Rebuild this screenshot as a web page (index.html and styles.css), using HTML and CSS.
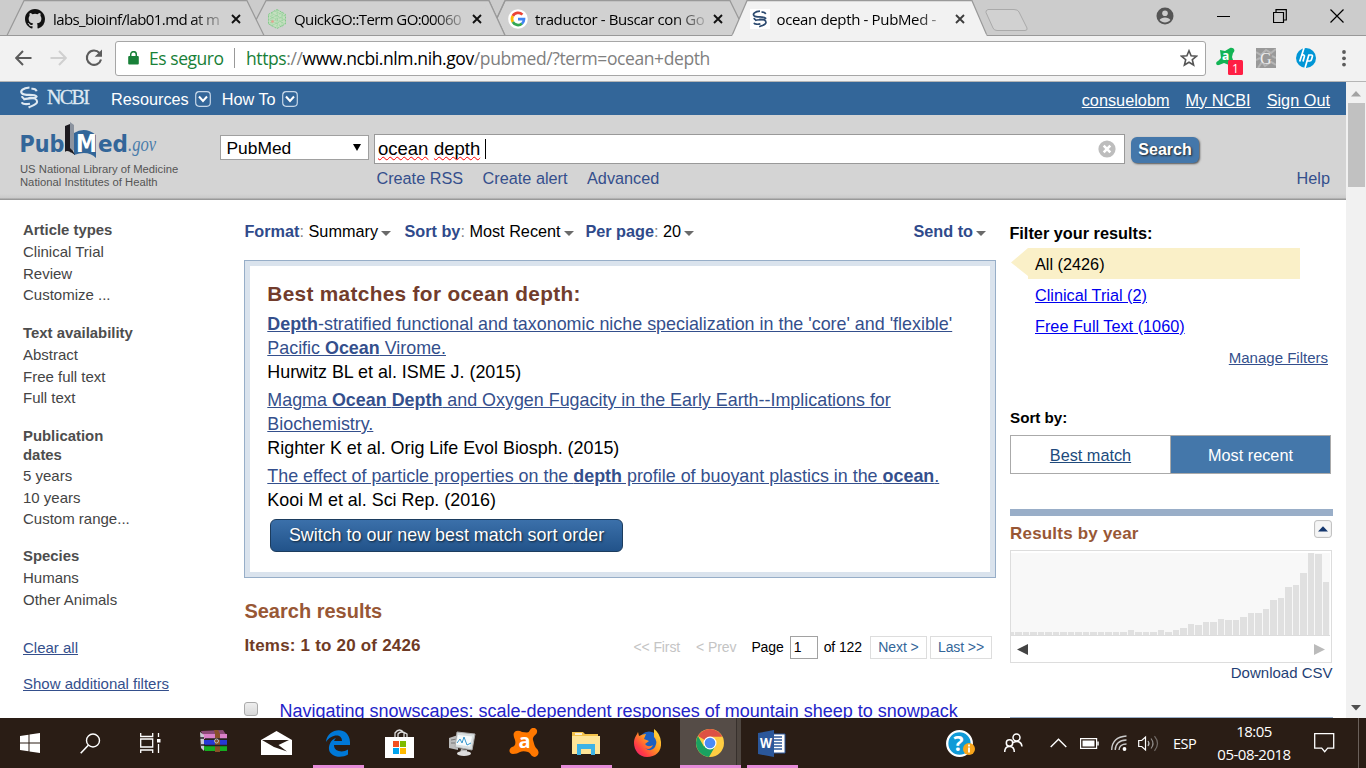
FILE: index.html
```html
<!DOCTYPE html>
<html lang="es">
<head>
<meta charset="utf-8">
<title>ocean depth - PubMed - NCBI</title>
<link rel="stylesheet" href="styles.css">
</head>
<body>
<svg class="defs" width="0" height="0"><defs>
  <symbol id="helix" viewBox="0 0 20 24"><path d="M10 1.500C3 2 0 5 2 7.500 5 11 15 7.500 17.500 11c0 2.500-10 1.500-14 3" fill="none" stroke="currentColor" stroke-width="2.300"/><path d="M12 2.800c3-.3 5 .8 5.500 2.700M2 10.500q.3 2 2.500 2.800M9 12.500c6-.5 9 1 9 4 0 3-5 4-9 6M2 17c.5 2.300 5 2.300 8.500 1.500" fill="none" stroke="currentColor" stroke-width="2.200"/></symbol>
  <symbol id="close" viewBox="0 0 10 10"><path d="M1 1l8 8M9 1l-8 8" stroke="#111" stroke-width="1.900"/></symbol>
  <symbol id="drop" viewBox="0 0 16 16"><rect x=".7" y=".7" width="14.600" height="14.600" rx="3.500" fill="none" stroke="#c5d6e8" stroke-width="1.200"/><path d="M4 5.500l4 4.500 4-4.500" fill="none" stroke="#fff" stroke-width="2"/></symbol>
</defs></svg>

<header class="tabstrip">
  <svg class="tabshapes" width="1366" height="36" viewBox="0 0 1366 36">
    <g fill="#d1d1d1" stroke="#999" stroke-width="1.200">
      <path d="M489 35.500L505 .7H730L747 35.500"/>
      <path d="M248 35.500L266 .7H489L505 35.500"/>
      <path d="M497 18L505 .7"/>
      <path d="M7 35.500L24 .7H247L264 35.500"/>
    </g>
    <path d="M489 .7L505 35.500H489L481 18z" fill="#d1d1d1"/>
    <path d="M489 .7L505 35.500" stroke="#999" stroke-width="1.200"/>
    <path d="M0 35.500H1366" stroke="#999"/>
    <path d="M732 35.500L747 .7H972L987 35.500V37H732" fill="#f2f2f2" stroke="#999" stroke-width="1.200"/>
    <path d="M732.600 35.500H986.400" stroke="#f2f2f2" stroke-width="2"/>
    <path d="M988 9.500H1014q4 0 5 2.500l8 16q.7 2.500-2 2.500H997q-3 0-4-2.500l-7-15.500q-.7-2 2-3z" fill="#d1d1d1" stroke="#aaa"/>
  </svg>
  <div class="tabs">
    <div class="tab t1">
      <svg width="20" height="20" viewBox="0 0 16 16"><path fill="#111" d="M8 0C3.580 0 0 3.580 0 8c0 3.540 2.290 6.530 5.470 7.590.4.070.55-.17.55-.38 0-.19-.01-.82-.01-1.490-2.010.37-2.530-.49-2.690-.94-.09-.23-.48-.94-.82-1.130-.28-.15-.68-.52-.01-.53.63-.01 1.080.58 1.230.82.720 1.210 1.870.87 2.330.66.070-.52.280-.87.510-1.070-1.780-.2-3.640-.89-3.640-3.950 0-.87.310-1.590.82-2.150-.08-.2-.36-1.020.08-2.120 0 0 .67-.21 2.200.82a7.600 7.600 0 0 1 4 0c1.530-1.040 2.200-.82 2.200-.82.440 1.100.160 1.920.080 2.120.510.560.820 1.270.820 2.150 0 3.070-1.870 3.750-3.650 3.950.290.250.540.730.540 1.480 0 1.070-.01 1.930-.01 2.200 0 .21.150.46.550.38A8 8 0 0 0 16 8c0-4.420-3.580-8-8-8z"/></svg>
      <span class="ttl">labs_bioinf/lab01.md at m</span><svg class="x" width="10" height="10"><use href="#close"/></svg>
    </div>
    <div class="tab t2">
      <svg width="20" height="20" viewBox="0 0 20 20"><path d="M10 .5l8.500 4.800v9.600L10 19.500l-8.500-4.600V5.300z" fill="#c4dfbf" stroke="#83c98a" stroke-dasharray="2 1"/><path d="M1 6l17 9M1 10l15 8M4 4l14 7M8 2l10 5M1 15l17-9M1 11l15-8M4 17l14-7M10 1v18M5 3v14M15 3v14" stroke="#8fd197" stroke-width=".8" stroke-dasharray="1.500 1"/><circle cx="5.500" cy="12.500" r="1.300" fill="#e8a090"/></svg>
      <span class="ttl">QuickGO::Term GO:00060</span><svg class="x" width="10" height="10"><use href="#close"/></svg>
    </div>
    <div class="tab t3">
      <svg width="20" height="20" viewBox="0 0 20 20"><circle cx="10" cy="10" r="9.800" fill="#fff"/><g fill="none" stroke-width="2.700"><path d="M14.400 5.600A6 6 0 0 0 4.800 7" stroke="#ea4335"/><path d="M4.800 7a6 6 0 0 0 0 6" stroke="#fbbc05"/><path d="M4.800 13a6 6 0 0 0 9.200 1.500" stroke="#34a853"/><path d="M10 10.200h6c0 2-.8 3.400-2.100 4.500" stroke="#4285f4"/></g></svg>
      <span class="ttl">traductor - Buscar con Go</span><svg class="x" width="10" height="10"><use href="#close"/></svg>
    </div>
    <div class="tab t4">
      <svg class="fav" width="20" height="20"><use href="#helix" x="2" y="1" width="16" height="18"/></svg>
      <span class="ttl">ocean depth - PubMed -</span><svg class="x" width="10" height="10"><use href="#close"/></svg>
    </div>
  </div>
  <div class="winbtns">
    <svg width="18" height="18" viewBox="0 0 18 18"><circle cx="9" cy="9" r="8.500" fill="#555"/><circle cx="9" cy="6.200" r="2.800" fill="#ccc"/><path d="M3.600 13c1.500-3.500 9.300-3.500 10.800 0-2.700 3.300-8.100 3.300-10.800 0z" fill="#ccc"/></svg>
    <svg width="13" height="13"><path d="M0 6.500h13" stroke="#000"/></svg>
    <svg width="14" height="14"><path d="M.5 3.500h10v10H.5zM3 3V.7h10.300v10.300H11" fill="none" stroke="#000" stroke-width="1.200"/></svg>
    <svg width="14" height="14"><path d="M.5 .5l13 13M13.500 .5l-13 13" stroke="#000" stroke-width="1.200"/></svg>
  </div>
</header>

<div class="toolbar">
  <div class="nav">
    <svg width="17" height="16" viewBox="0 0 17 16"><path d="M16.500 8H1.500M8 1L1.200 8 8 15" fill="none" stroke="#5c5c5c" stroke-width="2"/></svg>
    <svg width="17" height="16" viewBox="0 0 17 16"><path d="M.5 8h15M9 1l6.800 7L9 15" fill="none" stroke="#d0d0d0" stroke-width="2"/></svg>
    <svg width="18" height="18" viewBox="0 0 18 18"><path d="M14.500 4A7.200 7.200 0 1 0 16 10.500" fill="none" stroke="#5c5c5c" stroke-width="2.100"/><path d="M17 .5v7.300h-7.300z" fill="#5c5c5c"/></svg>
  </div>
  <div class="omni">
    <svg width="11" height="14" viewBox="0 0 11 14"><rect x=".2" y="5" width="10.600" height="8.500" rx="1" fill="#188038"/><path d="M2.700 6V3.500a2.800 2.800 0 0 1 5.600 0V6" fill="none" stroke="#188038" stroke-width="1.500"/></svg>
    <span class="secure">Es seguro</span><i class="vsep"></i>
    <span class="url"><b>https</b>://<em>www.ncbi.nlm.nih.gov</em>/pubmed/?term=ocean+depth</span>
    <svg class="star" width="18" height="18" viewBox="0 0 18 18"><path d="M9 1.800l2.100 5 5.300.4-4.100 3.500 1.300 5.300L9 13.200 4.400 16l1.300-5.300-4.100-3.500 5.300-.4z" fill="none" stroke="#555" stroke-width="1.600"/></svg>
  </div>
  <svg class="ext" width="28" height="29" viewBox="0 0 28 29"><path d="M5 3l5 1 5-3c4-1 6 3 3 5l-1 4 2 6-5 2-5-2-5 2c-3 1-4-3-1-4l3-3z" fill="#12b455"/><text x="7" y="13" class="exta">a</text><rect x="13" y="13" width="15" height="15" rx="1.500" fill="#ff1f44"/><text x="17" y="26" class="extn">1</text></svg>
  <svg class="ext2" width="20" height="20"><rect width="20" height="20" fill="#999"/><path d="M0 4l5 3 5-5 5 3 5-4M2 20l4-6 3 4 6-4 5 3M0 12l4-2M16 8l4 2" stroke="#b5b5b5" stroke-width="2" fill="none"/><text x="4" y="16" class="extg">G</text></svg>
  <svg class="ext3" width="20" height="20" viewBox="0 0 20 20"><circle cx="10" cy="10" r="10" fill="#0096d6"/><g stroke="#fff" stroke-width="1.700" fill="none"><path d="M8 0L3.700 13.500M5.500 7.300q3-1 3 .7L7 13.500M13 6.500L9 20M12.800 7h2.500q1.500 0 1 1.700l-.8 2.800q-.4 1.500-1.800 1.500h-2.400"/></g></svg>
  <svg class="dots" width="4" height="17"><g fill="#5c5c5c"><circle cx="2" cy="2" r="1.900"/><circle cx="2" cy="8.300" r="1.900"/><circle cx="2" cy="14.600" r="1.900"/></g></svg>
</div>

<div class="view">
<div class="page">
  <div class="ncbi">
    <svg class="hx" width="19" height="23"><use href="#helix"/></svg><span class="nlogo">NCBI</span>
    <span class="res">Resources</span><svg width="16" height="16"><use href="#drop"/></svg>
    <span class="how">How To</span><svg width="16" height="16"><use href="#drop"/></svg>
    <div class="acct"><a>consuelobm</a><a>My NCBI</a><a>Sign Out</a></div>
  </div>
  <div class="head">
    <div class="brand">
      <svg width="150" height="38" viewBox="0 0 150 38">
        <text x="-.5" y="29.500" class="pub" textLength="45" lengthAdjust="spacingAndGlyphs">Pub</text>
        <path d="M54 11q11-7 22 2v23q-8-8-22-3z" fill="#369"/>
        <path d="M50 0l4 3v25l-4 3z" fill="#8b939f"/><path d="M45 4l5-2v24q3 2 5 7-8-6-10-3z" fill="#1d1b20"/>
        <text x="56" y="29.500" class="med" textLength="21" lengthAdjust="spacingAndGlyphs">M</text>
        <text x="78" y="29.500" class="pub" textLength="30" lengthAdjust="spacingAndGlyphs">ed</text>
        <text x="108" y="29" class="gov" textLength="28" lengthAdjust="spacingAndGlyphs">.gov</text>
      </svg>
      <p>US National Library of Medicine<br>National Institutes of Health</p>
    </div>
    <div class="db">PubMed<svg width="8" height="7"><path d="M0 0h8L4 7z"/></svg></div>
    <div class="sbox">
      <div class="field"><span class="sp">ocean</span> <span class="sp">depth</span><i class="caret"></i>
        <svg class="clr" width="18" height="18"><circle cx="9" cy="9" r="8.600" fill="#bdbdbd"/><path d="M5.700 5.700l6.600 6.600M12.300 5.700l-6.600 6.600" stroke="#fff" stroke-width="2.600"/></svg></div>
      <div class="sub"><span>Create RSS</span><span>Create alert</span><span>Advanced</span></div>
    </div>
    <div class="go"><button>Search</button><span>Help</span></div>
  </div>

  <div class="cols">
    <aside class="side">
      <section><h4>Article types</h4><p>Clinical Trial</p><p>Review</p><p>Customize ...</p></section>
      <section><h4>Text availability</h4><p>Abstract</p><p>Free full text</p><p>Full text</p></section>
      <section><h4>Publication<br>dates</h4><p>5 years</p><p>10 years</p><p>Custom range...</p></section>
      <section><h4>Species</h4><p>Humans</p><p>Other Animals</p></section>
      <a>Clear all</a><a>Show additional filters</a>
    </aside>

    <main class="main">
      <div class="opts">
        <span class="o1"><b>Format</b><s>:</s> Summary<i class="tri"></i></span><span class="o2"><b>Sort by</b><s>:</s> Most Recent<i class="tri"></i></span><span class="o3"><b>Per page</b><s>:</s> 20<i class="tri"></i></span><span class="send"><b>Send to</b><i class="tri"></i></span>
      </div>
      <div class="best"><div class="bestin">
        <h3>Best matches for ocean depth:</h3>
        <div class="hit"><a><b>Depth</b>-stratified functional and taxonomic niche specialization in the 'core' and 'flexible'<br>Pacific <b>Ocean</b> Virome.</a><br>Hurwitz BL et al. ISME J. (2015)</div>
        <div class="hit"><a>Magma <b>Ocean</b> <b>Depth</b> and Oxygen Fugacity in the Early Earth--Implications for<br>Biochemistry.</a><br>Righter K et al. Orig Life Evol Biosph. (2015)</div>
        <div class="hit"><a>The effect of particle properties on the <b>depth</b> profile of buoyant plastics in the <b>ocean</b>.</a><br>Kooi M et al. Sci Rep. (2016)</div>
        <button>Switch to our new best match sort order</button>
      </div></div>
      <h2>Search results</h2>
      <div class="itemrow"><h5>Items: 1 to 20 of 2426</h5>
        <div class="pager"><span class="off">&lt;&lt; First</span><span class="off prev">&lt; Prev</span><span class="pg">Page</span><span class="num">1</span><span class="of">of 122</span><a>Next &gt;</a><a class="last">Last &gt;&gt;</a></div>
      </div>
      <div class="result"><i class="chk"></i><a>Navigating snowscapes: scale-dependent responses of mountain sheep to snowpack</a></div>
    </main>

    <aside class="right">
      <h4>Filter your results:</h4>
      <div class="all">All (2426)</div>
      <a class="flt">Clinical Trial (2)</a>
      <a class="flt">Free Full Text (1060)</a>
      <a class="manage">Manage Filters</a>
      <h6>Sort by:</h6>
      <div class="toggle"><span class="bm">Best match</span><span class="mr">Most recent</span></div>
      <div class="bar"></div>
      <div class="yr"><h4>Results by year</h4><svg width="18" height="18"><rect x=".6" y=".6" width="16.800" height="16.800" rx="2.500" fill="#f5f5f5" stroke="#bbb"/><path d="M4 11.500L9 6.300l5 5.200z" fill="#14376e"/></svg></div>
      <div class="chart"><div class="plot" id="plot"></div>
        <div class="arrows"><svg width="11" height="11"><path d="M0 5.500L11 0v11z" fill="#444"/></svg><svg width="11" height="11"><path d="M11 5.500L0 0v11z" fill="#bbb"/></svg></div></div>
      <div class="csv">Download CSV</div>
      <div class="nextbar"></div>
    </aside>
  </div>
</div>
<div class="scroll"><svg width="10" height="6"><path d="M0 5.500L5 0l5 5.500z" fill="#a3a3a3"/></svg><i class="thumb"></i><svg class="dn" width="10" height="6"><path d="M0 0h10L5 5.500z" fill="#505050"/></svg></div>
</div>

<footer class="task">
  <div class="c60"><svg width="20" height="20"><path d="M0 3l8.500-1.200V9.500H0zM9.500 1.600L20 0v9.500H9.500zM0 10.500h8.500v7.700L0 17zM9.500 10.500H20V20L9.500 18.400z" fill="#fff"/></svg></div>
  <div class="c60"><svg width="21" height="21"><circle cx="13" cy="7.500" r="6.500" fill="none" stroke="#fff" stroke-width="1.400"/><path d="M8.300 12.300L.7 20.200" stroke="#fff" stroke-width="1.600"/></svg></div>
  <div class="c60 tv"><svg width="21" height="20"><path d="M.7 0v3.500h12V0M.7 6h12v8H.7zM.7 20v-3h12v3M18.500 0v4M18.500 11v9" fill="none" stroke="#fff" stroke-width="1.300"/><path d="M17 6h3.500v3.500H17z" fill="#fff"/></svg></div>
  <div class="c62 rar"><svg width="28" height="22"><path d="M1 1l22-1 4 6H3z" fill="#8c4a78"/><path d="M3 4h24v5H4z" fill="#d980c8"/><path d="M0 8l4 2h23v5H4z" fill="#2638d5"/><path d="M1 14l4 2h22v5H5z" fill="#16ad20"/><path d="M0 2l4 3v16l-3-3z" fill="#c9c7d2"/><path d="M14 0h4l2 4v18h-5V4z" fill="#885128"/><path d="M0 8h4M1 15h4M5 9h22M5 15.500h22" stroke="#222" stroke-width="1.300"/><circle cx="16.500" cy="11" r="2" fill="none" stroke="#bbb"/></svg></div>
  <div class="c62"><svg width="31" height="24"><path d="M0 9L15.500 0 31 9v15H0z" fill="#fff"/><path d="M1 9h27l-10.500 5 8.500 6.500L13 16z" fill="#291c15"/></svg></div>
  <div class="c62 u"><svg width="26" height="28" viewBox="0 0 26 28"><path d="M1 13C2-1 24-4 25 13v3H9c0 7 9 8 14 4.500v5C14 31-1 26 5.500 13.500 7.500 10 11 9 11 9 9.500 10.500 9.200 11.500 9.200 12H17C17 4 6 5 1 13z" fill="#0078d7"/></svg></div>
  <div class="c62"><svg width="30" height="29"><path d="M0 8h29v21H0z" fill="#fff"/><path d="M10 8V4q4.500-6 9 0v4M13 8V5q3-4 9 0v3" stroke="#ddd" stroke-width="1.300" fill="none"/><path d="M8 12h6v6H8z" fill="#f25022"/><path d="M15 12h6v6h-6z" fill="#7fba00"/><path d="M8 19h6v6H8z" fill="#00a4ef"/><path d="M15 19h6v6h-6z" fill="#ffb900"/></svg></div>
  <div class="c62"><svg width="28" height="25"><path d="M1 7l9-3v15L1 17z" fill="#bbb"/><path d="M3 9l6-1M3 12l6 0" stroke="#777"/><path d="M9 1l18 2-3 16-17-3z" fill="#d9dfe0" stroke="#aaa"/><path d="M10 4l14 1.500-2 10-14-2z" fill="#f7fbfc"/><path d="M9 12l3-4 2 4 2-6 3 8 4-2" fill="none" stroke="#3596cc"/><path d="M13 18l6 1v3H12z" fill="#bbb"/><ellipse cx="16" cy="22.500" rx="7" ry="2.500" fill="#ddd"/></svg></div>
  <div class="c62"><svg width="30" height="30" viewBox="0 0 30 30"><path d="M7 3q3-1 6 1l5 .5q2 0 3-2.500c2-4 8-2 7 2 0 3-5 4-4 8 1 3 1 5 3 8 4 3 3 8-1 9-4 0-4-4-7-5s-6-1-8 0-4 2-7 2c-4 0-5-5-1-7 3-1 4-3 3-7-1-3-3-7 1-9z" fill="#ff7800"/><text x="9.500" y="19.500" class="ava">a</text></svg></div>
  <div class="c62 u"><svg width="28" height="24"><path d="M0 1h11l2 2h13v3H0z" fill="#f4c24a"/><path d="M0 5h28v18H0z" fill="#ffe598"/><path d="M3 3h7" stroke="#fff" stroke-width="1.500"/><path d="M5 24V13h18v11h-4v-6H9v6z" fill="#3eb3e6"/></svg></div>
  <div class="c62"><svg width="28" height="29" viewBox="0 0 28 29"><defs><linearGradient id="ff" x1="1" y1="0" x2="0" y2="1"><stop offset="0" stop-color="#ffea40"/><stop offset=".45" stop-color="#ff9622"/><stop offset=".75" stop-color="#ff3b45"/><stop offset="1" stop-color="#e21b80"/></linearGradient></defs><circle cx="15" cy="12.500" r="10" fill="#1b5fc0"/><path d="M4 3l1 4q4-2 7-2l-2 5 5 2-4 3q3 4 8 1-3 6-8 3 6 5 10-1 3-6-1-10 0-5 0-8 6 4 7 13c1 10-6 15-14 15C5 28 0 21 0 14 0 8 3 6 4 3z" fill="url(#ff)"/></svg></div>
  <div class="c62 u on"><svg width="28" height="28" viewBox="0 0 28 28"><circle cx="14" cy="14" r="14" fill="#ffcd42"/><path d="M14 14L1.900 7A14 14 0 0 1 26.100 7z" fill="#dd5144"/><path d="M14 14L7.900 17.500 1.900 7A14 14 0 0 0 13 28l6-10.400z" fill="#1aa261"/><path d="M14 7.500h12.400L14 14z" fill="#ffcd42"/><path d="M14 7.500h12.400L26 7 14 5z" fill="#dd5144"/><circle cx="14" cy="14" r="6.500" fill="#fff"/><circle cx="14" cy="14" r="5.300" fill="#4b8bf5"/></svg></div>
  <div class="c62 u"><svg width="28" height="27"><path d="M15 4h12v19H15z" fill="#fff" stroke="#2b579a"/><path d="M16 7h8M16 10h8M16 13h8M16 16h8M16 19h8" stroke="#2b579a" stroke-width="1.300"/><path d="M0 3L16 0v27L0 24z" fill="#2b579a"/><text x="2" y="18" class="w" textLength="12" lengthAdjust="spacingAndGlyphs">W</text></svg></div>
  <div class="tray">
    <svg width="29" height="27"><circle cx="13.500" cy="13.500" r="12.300" fill="#109ad7" stroke="#fff" stroke-width="2.300"/><text x="7.500" y="21" class="q">?</text><circle cx="23" cy="19" r="6" fill="#f7a51b"/><path d="M23 14.500v2M23 17.500v5" stroke="#fff" stroke-width="1.800"/></svg>
    <svg width="19" height="20"><g fill="none" stroke="#fff" stroke-width="1.500"><circle cx="5.500" cy="10" r="3.200"/><path d="M.7 19q0-5.500 4.800-5.500T10.300 19"/><circle cx="12.500" cy="4.500" r="3.500"/><path d="M9 9.500q8-3 9 4"/></g></svg>
    <svg width="17" height="10"><path d="M.7 9l7.800-7.800L16.300 9" fill="none" stroke="#fff" stroke-width="1.400"/></svg>
    <svg width="19" height="11"><path d="M.6.600h16v9.800H.6z" fill="none" stroke="#fff" stroke-width="1.200"/><path d="M2.500 2.500h12v6h-12z" fill="#fff"/><path d="M18 3.500v4" stroke="#fff" stroke-width="1.500"/></svg>
    <svg width="16" height="16"><g fill="none" stroke="#ccc" stroke-width="1.300"><path d="M.7 15Q1 2 15.500 1"/><path d="M4.200 15Q4.500 5.500 15.500 5"/><path d="M8 15q.5-6 7.500-6"/></g><circle cx="13.500" cy="14" r="1.900" fill="#fff"/></svg>
    <svg width="21" height="17"><path d="M.7 5.500h3L7.500 2v13L3.700 11.500h-3z" fill="none" stroke="#fff" stroke-width="1.200"/><g fill="none" stroke="#bbb" stroke-width="1.200"><path d="M10 6q2 2.500 0 5"/><path d="M13 3.500q4 5 0 10" opacity=".7"/><path d="M16.500 1.200q6 7.300 0 14.600" opacity=".5"/></g></svg>
    <span class="esp">ESP</span>
    <span class="clock">18:05<br>05-08-2018</span>
    <svg width="21" height="20"><path d="M.7.700h19v14.500h-6l-3 3.500-3-3.500h-7z" fill="none" stroke="#fff" stroke-width="1.300"/></svg>
    <i class="peek"></i>
  </div>
</footer>
<script src="chart.js"></script>
</body>
</html>
```

FILE: styles.css
```css
* { box-sizing: border-box; }
body { margin: 0; width: 1366px; height: 768px; overflow: hidden; background: #fff; font-family: "Liberation Sans", Arial, sans-serif; font-size: 16.25px; color: #000; }
svg { display: block; flex: none; }
h2, h3, h4, h5, h6, p { margin: 0; }
button { font-family: inherit; }
.defs { position: absolute; }

.tabstrip { position: relative; height: 36px; background: #ccc; display: flex; font-family: "Open Sans", "Noto Sans", sans-serif; }
.tabshapes { position: absolute; left: 0; top: 0; }
.tabs { position: relative; display: flex; flex: none; padding-left: 25px; }
.tab { display: flex; align-items: center; flex: none; width: 241.5px; height: 36px; padding-top: 2px; }
.ttl { flex: none; width: 169px; margin-left: 8px; font-size: 15px; line-height: 22px; letter-spacing: -0.6px; white-space: nowrap; overflow: hidden; -webkit-mask-image: linear-gradient(90deg, #000 82%, rgba(0,0,0,.2)); mask-image: linear-gradient(90deg, #000 82%, rgba(0,0,0,.2)); }
.t2 .ttl { margin-left: 7.5px; }
.t3 .ttl { letter-spacing: -.4px; margin-left: 7px; }
.x { margin-left: 9px; }
.fav { background: #fff; color: #2c4a70; }
.t4 .ttl { letter-spacing: -.35px; margin-left: 7px; }
.t4 .x { opacity: .8; }
.winbtns { position: relative; margin-left: 165px; display: flex; align-items: center; padding-bottom: 4px; gap: 43px; }

.toolbar { height: 46px; background: #f2f2f2; border-bottom: 1px solid #b5b5b5; display: flex; align-items: center; font-family: "Open Sans", "Noto Sans", sans-serif; padding-bottom: 1px; }
.nav { width: 115px; flex: none; display: flex; gap: 18px; padding-left: 15px; align-items: center; }
.omni { width: 1091px; height: 35px; border: 1px solid #a6a6a6; border-radius: 3px; background: #fff; display: flex; align-items: center; padding-left: 12px; white-space: nowrap; font-size: 17.5px; flex: none; }
.secure { color: #188038; width: 83px; margin-left: 10px; letter-spacing: -0.45px; }
.vsep { width: 1px; height: 20px; background: #999; margin-left: 2px; margin-right: 11px; }
.url { color: #808080; letter-spacing: -0.4px; }
.url b { font-weight: 400; color: #188038; }
.url em { font-style: normal; color: #000; }
.star { margin-left: auto; margin-right: 7px; }
.ext { margin-left: 9px; margin-top: 7px; }
.ext2 { margin-left: 13px; }
.ext3 { margin-left: 20px; }
.dots { margin-left: 26px; }
.exta { font: bold 12px "Open Sans"; fill: #fff; }
.extn { font: 12px "Open Sans"; fill: #fff; }
.extg { font: 16px "Liberation Serif"; fill: #eee; }

.view { display: flex; height: 636px; overflow: hidden; }
.page { width: 1346px; }
.scroll { width: 20px; background: #f1f1f1; display: flex; flex-direction: column; align-items: center; padding-top: 9px; }
.thumb { width: 17px; height: 84px; background: #c1c1c1; margin-top: 6px; }
.dn { margin-top: auto; margin-bottom: 7px; }

.ncbi { height: 33px; background: #369; color: #fff; display: flex; align-items: center; padding-left: 20px; }
.hx { color: #dfe9f2; margin-top: -2px; }
.nlogo { font: 20px/24px "Liberation Serif", serif; color: #dfe9f2; width: 44px; margin: -3px 0 0 8px; letter-spacing: -1.6px; -webkit-text-stroke: .3px #dfe9f2; }
.res { margin-left: 20px; margin-right: 6px; padding-top: 2px; }
.how { margin-left: 11px; margin-right: 6px; padding-top: 2px; }
.acct { margin-left: auto; margin-right: 16px; display: flex; gap: 16px; text-decoration: underline; padding-top: 3px; font-size: 16.3px; }

.head { height: 85px; background: linear-gradient(#d4d4d4 0 79px, #cacaca 83px, #999 84px); display: flex; padding-left: 20px; }
.brand { width: 200px; padding-top: 7px; }
.brand p { font-size: 11.25px; line-height: 13px; color: #555; margin-top: 3px; white-space: nowrap; }
.pub { font: bold 23px "DejaVu Sans", sans-serif; fill: #369; }
.med { font: bold 24px "DejaVu Sans", sans-serif; fill: #fff; }
.gov { font: italic 20px "Liberation Serif", serif; fill: #4a7cab; }
.db { width: 149px; height: 25px; margin-top: 20px; border: 1px solid #a0a0a0; background: #fff; font-size: 17.4px; line-height: 24px; padding: 0 7px 0 5.5px; display: flex; justify-content: space-between; align-items: center; }
.sbox { width: 751px; margin: 19px 0 0 5px; }
.field { height: 30px; border: 1px solid #999; background: #fff; font-size: 18.5px; line-height: 28px; padding-left: 3px; display: flex; align-items: center; gap: 5px; }
.sp { text-decoration: underline wavy red 1px; text-underline-offset: 1px; text-decoration-skip-ink: none; }
.sp + .sp { margin-left: .5px; }
.caret { width: 1px; height: 20px; background: #000; }
.clr { margin-left: auto; margin-right: 8px; }
.sub { display: flex; gap: 19.500px; padding-left: 2.400px; margin-top: 4px; line-height: 21px; color: #344f8c; }
.go { flex: 1; padding: 22px 16px 0 6px; display: flex; flex-direction: column; align-items: flex-start; }
.go button { width: 68px; height: 26px; padding: 0; border: 0; border-radius: 6px; background: #4477aa; color: #fff; font-size: 16px; font-weight: bold; text-shadow: 1px 1px 2px #222; box-shadow: 1px 1px 2px #555; }
.go span { align-self: flex-end; color: #344f8c; line-height: 21px; margin-top: 5px; }

.cols { display: grid; grid-template-columns: 221px 752px 323px; padding-left: 23px; height: 518px; overflow: hidden; }
.side { font-size: 15px; color: #444; padding-top: 21px; }
.side section { margin-bottom: 18px; }
.side section:nth-child(3) { margin-bottom: 17px; }
.side h4 { font-size: 14.900px; line-height: 19px; color: #4d4d4d; margin-bottom: 1px; }
.side p { line-height: 21.670px; }
.side section:nth-child(3) h4 { margin-bottom: 0; }
.side a { display: block; line-height: 21px; color: #344f8c; text-decoration: underline; margin-top: 15px; }
.side section + a { margin-top: 26.500px; }

.opts { display: flex; line-height: 20px; margin-top: 20.500px; white-space: nowrap; padding-left: .4px; }
.opts b { color: #2f4a8b; }
.opts s { text-decoration: none; color: #888; }
.o1 { width: 160px; } .o2 { width: 181px; }
.send { margin-left: auto; margin-right: 10px; }
.tri { display: inline-block; border: 5px solid transparent; border-top-color: #6a6a6a; border-bottom: 0; margin-left: 3px; vertical-align: 1px; }
.best { height: 318px; margin-top: 19.500px; border: 1px solid #97aec8; padding: 5px; background: #dae3ed; }
.bestin { height: 306px; background: #fff; padding: 16px 0 0 17.300px; font-size: 17.900px; line-height: 24px; white-space: nowrap; }
.best h3 { font-size: 20.800px; letter-spacing: .33px; color: #723c2c; margin-bottom: 6px; }
.hit { margin-bottom: 4px; }
.hit a { color: #344f8c; text-decoration: underline; }
.bestin button { display: block; width: 353px; height: 33px; margin: 7px 0 0 2.700px; border: 1px solid #1c3c5e; border-radius: 6px; background: linear-gradient(#3b70aa, #22538a); color: #fff; font-size: 17.900px; padding: 0; text-shadow: 1px 1px 2px #123; }
.main h2 { font-size: 20px; line-height: 24px; color: #985735; margin-top: 21px; padding-left: .4px; }
.itemrow { display: flex; justify-content: space-between; margin-top: 13px; height: 24px; }
.itemrow h5 { font-size: 17px; letter-spacing: .2px; line-height: 19px; color: #6f3b25; padding-left: .4px; }
.pager { display: flex; font-size: 14px; line-height: 22px; height: 23px; letter-spacing: -.1px; padding-right: 4px; white-space: nowrap; }
.pager .off { color: #c4c4c4; } .prev { margin: 0 15px 0 16px; }
.pager > span:not(.num), .pager a { padding-top: 1px; line-height: 21px; }
.num { width: 28px; height: 23px; border: 1px solid #a2a2a2; padding-left: 3px; margin: 0 6px; line-height: 21px; }
.pager a { border: 1px solid #ddd; color: #369; height: 23px; width: 57px; text-align: center; margin-left: 8px; padding: 0; line-height: 21px; }
.pager a.last { margin-left: 3px; width: 62px; }
.result { display: flex; margin-top: 39px; line-height: 24px; font-size: 18px; color: #2323c8; white-space: nowrap; }
.chk { width: 14px; height: 14px; border: 1px solid #aaa; border-radius: 3px; background: linear-gradient(#eee, #d8d8d8); margin: 3px 21.400px 0 0; }

.right { margin-left: 14px; width: 323px; white-space: nowrap; }
.right > h4 { font-size: 16.300px; line-height: 20px; margin: 23px 0 0 -.6px; height: 25px; }
.all, .flt { display: block; line-height: 31px; height: 31px; margin-left: 1px; padding-left: 24px; }
.all { width: 289px; background: #faf0c8; clip-path: polygon(0 47%, 17px 0, 100% 0, 100% 100%, 17px 100%, 17px 90%); padding-top: 1px; }
.flt { color: #00e; text-decoration: underline; padding-top: 1px; }
.manage { display: block; text-align: right; font-size: 15px; line-height: 20px; color: #344f8c; text-decoration: underline; margin: 7px 5px 0 0; }
.right h6 { font-size: 15.200px; line-height: 20px; margin-top: 40px; }
.toggle { display: flex; width: 321px; height: 39px; border: 1px solid #aaa; margin-top: 7px; line-height: 39px; text-align: center; }
.bm { width: 160px; border-right: 1px solid #aaa; text-decoration: underline; color: #204a7c; }
.mr { flex: 1; background: #4477aa; color: #fff; }
.bar { height: 7px; background: #99aec8; margin-top: 35px; }
.yr { display: flex; justify-content: space-between; align-items: flex-start; padding: 4px 1px 0 0; height: 34px; }
.yr h4 { font-size: 17px; letter-spacing: .2px; line-height: 20px; color: #985735; margin-top: 4px; }
.chart { width: 322px; height: 113px; border: 1px solid #ddd; }
.plot { height: 85px; border-bottom: 1px solid #ddd; background: linear-gradient(#fff 2px, #f8f8f8 2px); display: flex; align-items: flex-end; overflow: hidden; margin-right: 1px; }
.plot i { flex: none; width: 6.500px; margin-right: 1px; background: #e0e0e0; }
.arrows { display: flex; justify-content: space-between; padding: 8px 6px 0; }
.csv { text-align: right; font-size: 15px; line-height: 20px; color: #1f3f75; padding-right: .5px; }
.nextbar { height: 7px; background: #99aec8; margin-top: 34px; }

.task { height: 50px; background: #2a1d15; display: flex; color: #fff; font-family: "Open Sans", "Noto Sans", sans-serif; }
.c60, .c62 { display: flex; justify-content: center; align-items: center; position: relative; flex: none; }
.c60 { width: 60px; } .c62 { width: 62px; }
.tv { width: 63px; padding-right: 3px; }
.rar { padding-bottom: 5px; }
.u::after { content: ""; position: absolute; left: 6px; width: 51px; bottom: 0; height: 3px; background: #e58bd8; }
.on { background: linear-gradient(90deg, #554c47 56px, #37302c 56px 57px, #4e4640 57px); }
.on { width: 61px; margin-left: 1px; padding-right: 1px; }
.on::after { left: 0; width: 61px; }
.ava { font: bold 20px "Open Sans"; fill: #fff; }
.w { font: bold 15px "Open Sans"; fill: #fff; }
.q { font: bold 21px "Open Sans"; fill: #fff; }
.tray { flex: 1; display: flex; align-items: center; padding-left: 143px; }
.tray svg:nth-child(2) { margin-left: 29px; }
.tray svg:nth-child(3) { margin-left: 27px; }
.tray svg:nth-child(4) { margin-left: 13px; }
.tray svg:nth-child(5) { margin-left: 12px; }
.tray svg:nth-child(6) { margin-left: 11px; }
.esp { margin-left: 14px; font-size: 14.5px; letter-spacing: -.5px; width: 42px; }
.clock { font-size: 15px; line-height: 23px; letter-spacing: -.5px; text-align: center; width: 78px; margin-right: 21px; }
.peek { width: 1px; height: 50px; background: #6a605a; margin-left: 23px; }
```

FILE: chart.js
```js
// Results per year, as bar heights in pixels, oldest first.
const heights = [3,3,3,3,3,3,3,3,3,3,3,3,3,3,3,3,5,3,3,3,5,3,5,7,11,10,13,13,16,15,15,18,22,22,26,35,37,48,50,62,82,81,53];
const plot = document.getElementById('plot');
heights.forEach((h, i) => {
  const bar = document.createElement('i');
  bar.style.height = h + 'px';
  if (i === 0) bar.style.width = '3px';
  plot.appendChild(bar);
});
```
